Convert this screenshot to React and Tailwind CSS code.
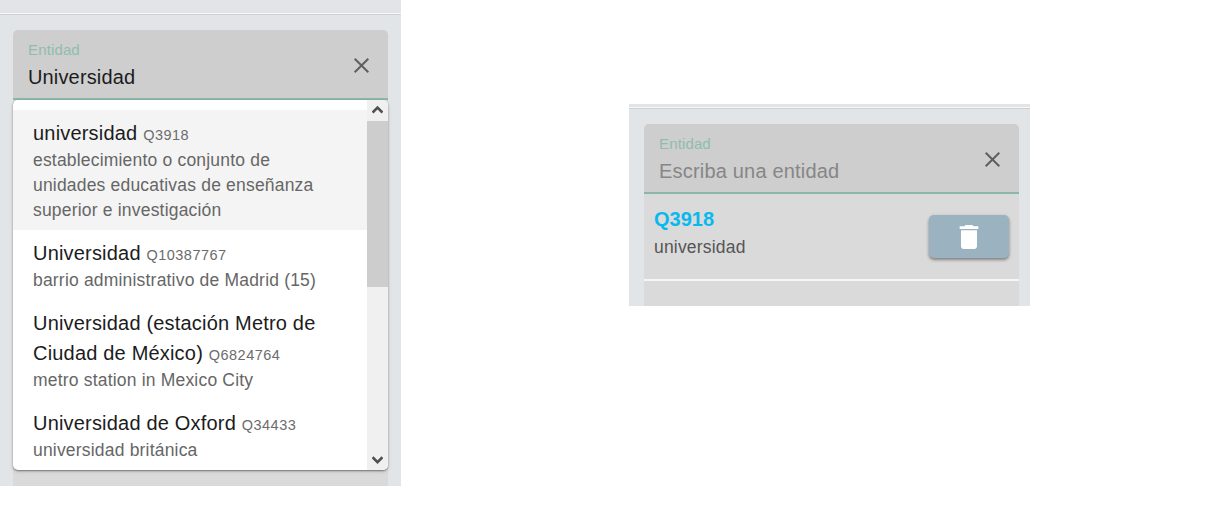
const results = [
  { label: 'universidad', id: 'Q3918', description: 'establecimiento o conjunto de unidades educativas de enseñanza superior e investigación', active: true },
  { label: 'Universidad', id: 'Q10387767', description: 'barrio administrativo de Madrid (15)' },
  { label: 'Universidad (estación Metro de Ciudad de México)', id: 'Q6824764', description: 'metro station in Mexico City' },
  { label: 'Universidad de Oxford', id: 'Q34433', description: 'universidad británica' },
];

function Divider() {
  return <div className="h-[2px] shrink-0 border-b border-[#cfcfcf] bg-[#f8f8f8]" />;
}

function EntityField({ value, placeholder }) {
  return (
    <div className="flex h-[70px] shrink-0 items-center justify-between rounded-t-[5px] border-b-2 border-[#8ab8a8] bg-[#cecece] pr-[18px] pl-[15px]">
      <div className="flex h-full flex-col pt-[10px]">
        <span className="text-[15px] leading-[20px] tracking-[0.14px] text-[#8ebdad]">Entidad</span>
        <span className={value ? 'mt-[2px] text-[20px] leading-[30px] tracking-[0.15px] text-[#1c1c1c]' : 'mt-[2px] text-[20px] leading-[30px] tracking-[0.19px] text-[#868686]'}>
          {value || placeholder}
        </span>
      </div>
      <svg className="mt-[3px] h-[17px] w-[17px]" viewBox="0 0 17 17" fill="none" stroke="#5f5f5f" strokeWidth="2">
        <path d="M1.7 1.7 15.3 15.3M15.3 1.7 1.7 15.3" />
      </svg>
    </div>
  );
}

function Scrollbar() {
  return (
    <div className="flex w-[21px] shrink-0 flex-col bg-[#f0f0f0]">
      <div className="flex h-[21px] justify-center pt-[5px]">
        <svg className="h-[9px] w-[11px]" viewBox="0 0 11 9" fill="none" stroke="#505050" strokeWidth="2.6">
          <path d="M.6 7.600 5.500 2.700l4.900 4.900" />
        </svg>
      </div>
      <div className="h-[166px] bg-[#cdcdcd]" />
      <div className="mt-auto flex h-[15px] justify-center">
        <svg className="h-[9px] w-[11px]" viewBox="0 0 11 9" fill="none" stroke="#505050" strokeWidth="2.6">
          <path d="M.6 2.200 5.500 7.100l4.900-4.900" />
        </svg>
      </div>
    </div>
  );
}

function ResultItem({ label, id, description, active }) {
  return (
    <li className={active ? 'bg-[#f4f4f4] py-[7.5px] pr-[40px] pl-[20px]' : 'py-[7.5px] pr-[40px] pl-[20px]'}>
      <div className="text-[20px] leading-[30px] tracking-[0.19px] text-[#1c1c1c]">
        {label} <span className="text-[14.5px] leading-none tracking-[0.48px] text-[#6c6c6c]">{id}</span>
      </div>
      <div className="text-[17.5px] leading-[25px] tracking-[0.19px] text-[#666666]">{description}</div>
    </li>
  );
}

export default function App() {
  return (
    <div className="flex h-[524px] w-[1210px] items-start gap-[228px] overflow-hidden bg-white font-['Liberation_Sans',Arial,sans-serif]">
      <section className="flex h-[486px] w-[401px] flex-col overflow-hidden bg-[#e1e5e8] pt-[13px]">
        <Divider />
        <div className="mt-[15px] mr-[13px] ml-[13px] flex grow flex-col rounded-t-[5px] bg-[#dadada]">
          <EntityField value="Universidad" />
          <div className="flex h-[370px] overflow-hidden rounded-[5px] bg-white shadow-[0_1px_2px_rgba(0,0,0,0.45),0_2px_5px_rgba(0,0,0,0.08)]">
            <ul className="min-w-0 grow pt-[10px]">
              {results.map((r) => (
                <ResultItem key={r.id} {...r} />
              ))}
            </ul>
            <Scrollbar />
          </div>
        </div>
      </section>

      <section className="mt-[104px] flex h-[202px] w-[401px] flex-col overflow-hidden bg-[#e1e5e8] pt-[3px]">
        <Divider />
        <div className="mt-[15px] mr-[11px] ml-[15px] flex grow flex-col rounded-t-[5px] bg-[#dadada]">
          <EntityField placeholder="Escriba una entidad" />
          <div className="flex h-[87px] items-start justify-between border-b-2 border-[#f6f6f6] pr-[10px] pl-[10px]">
            <div className="pt-[10px]">
              <div className="text-[20px] leading-[30px] font-bold text-[#08b9ee]">Q3918</div>
              <div className="pt-px text-[17.5px] leading-[25px] tracking-[0.19px] text-[#555555]">universidad</div>
            </div>
            <button className="mt-[21px] flex h-[43px] w-[80px] items-center justify-center rounded-[5px] bg-[#9bb2c0] shadow-[0_2px_3px_rgba(0,0,0,0.35),0_1px_4px_rgba(0,0,0,0.1)]" aria-label="Eliminar">
              <svg className="mt-px h-[32px] w-[32px]" viewBox="0 0 24 24" fill="#ffffff">
                <path d="M6 19c0 1.100.9 2 2 2h8c1.100 0 2-.9 2-2V7H6v12zM19 4h-3.500l-1-1h-5l-1 1H5v2h14V4z" />
              </svg>
            </button>
          </div>
        </div>
      </section>
    </div>
  );
}
